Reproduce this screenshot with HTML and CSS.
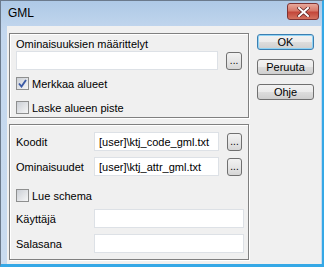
FILE: index.html
```html
<!DOCTYPE html>
<html lang="fi">
<head>
    <meta charset="UTF-8">
    <title>GML</title>
    <link rel="stylesheet" href="styles.css">
</head>
<body>
    <div class="window">
        <!-- Title bar -->
        <div class="titlebar">
            <span class="title">GML</span>
            <button class="close">
                <svg width="13" height="10" viewBox="0 0 13 10">
                    <path d="M2 1 L11 9 M11 1 L2 9" stroke="#5a2323" stroke-width="3.4" stroke-linecap="square"/>
                    <path d="M2 1 L11 9 M11 1 L2 9" stroke="#ffffff" stroke-width="2" stroke-linecap="square"/>
                </svg>
            </button>
        </div>

        <div class="client">
            <div class="main">
                <!-- Attribute definitions -->
                <div class="group group-top">
                    <div class="caption">Ominaisuuksien määrittelyt</div>
                    <div class="field-row">
                        <input class="text wide" type="text">
                        <button class="browse">...</button>
                    </div>
                    <label class="check first">
                        <span class="box checked">
                            <svg width="9" height="9" viewBox="0 0 9 9">
                                <path d="M1 4.5 L3.5 7.5 L8 1" fill="none" stroke="#3b5aa5" stroke-width="1.9"/>
                            </svg>
                        </span>
                        Merkkaa alueet
                    </label>
                    <label class="check second">
                        <span class="box"></span>
                        Laske alueen piste
                    </label>
                </div>

                <!-- Files and login -->
                <div class="group group-bottom">
                    <div class="field-row">
                        <span class="label">Koodit</span>
                        <input class="text" type="text" value="[user]\ktj_code_gml.txt">
                        <button class="browse">...</button>
                    </div>
                    <div class="field-row next">
                        <span class="label">Ominaisuudet</span>
                        <input class="text" type="text" value="[user]\ktj_attr_gml.txt">
                        <button class="browse">...</button>
                    </div>
                    <label class="check schema">
                        <span class="box"></span>
                        Lue schema
                    </label>
                    <div class="field-row login">
                        <span class="label">Käyttäjä</span>
                        <input class="text long" type="text">
                    </div>
                    <div class="field-row next">
                        <span class="label">Salasana</span>
                        <input class="text long" type="password">
                    </div>
                </div>
            </div>

            <div class="side">
                <button class="button default">OK</button>
                <button class="button">Peruuta</button>
                <button class="button">Ohje</button>
            </div>
        </div>
    </div>
</body>
</html>
```

FILE: styles.css
```css
body {
    margin: 0;
    padding: 0;
    font-family: "Liberation Sans", Arial, sans-serif;
    font-size: 11px;
    color: #000;
    background: #c6d9ee;
}
.window {
    width: 324px;
    height: 267px;
    box-sizing: border-box;
    background: linear-gradient(to bottom, #aec9e6, #c3d7ee 30px, #c9dbef);
    border-left: 1px solid #6b7a8c;
    border-top: 1px solid #6b7a8c;
    border-right: 2px solid #35a8e6;
    border-bottom: 3px solid #35a8e6;
    display: flex;
    flex-direction: column;
}
.titlebar {
    height: 25px;
    display: flex;
    align-items: center;
    justify-content: space-between;
    padding: 0 3px 0 7px;
}
.title {
    font-family: "Liberation Sans", Arial, sans-serif;
    font-size: 12px;
    margin-top: -2px;
}
.close {
    width: 32px;
    height: 17px;
    margin-top: -4px;
    padding: 0;
    border: 1px solid #7e3434;
    border-radius: 3px;
    background: linear-gradient(to bottom, #e8a89b, #d7796a 45%, #c3473a 55%, #d4735f);
    display: flex;
    align-items: center;
    justify-content: center;
}
.client {
    flex: 1;
    margin: 0 1px 0 6px;
    background: #f0f0f0;
    display: flex;
    padding: 7px 0 0 2px;
}
.main {
    width: 240px;
}
.group {
    box-sizing: border-box;
    border: 1px solid #808080;
    box-shadow: inset 1px 1px 0 #fff, 1px 1px 0 #fff;
    padding: 0 6px;
}
.group-top {
    height: 85px;
    padding-top: 4px;
}
.group-bottom {
    height: 136px;
    margin-top: 6px;
    padding-top: 7px;
}
.caption {
    height: 13px;
    line-height: 13px;
}
.field-row {
    display: flex;
    align-items: center;
    height: 19px;
}
.field-row.next {
    margin-top: 6px;
}
.field-row.login {
    margin-top: 7px;
}
.label {
    width: 78px;
    flex: none;
}
.text {
    box-sizing: border-box;
    height: 19px;
    width: 125px;
    margin: 0;
    padding: 0 4px;
    border: 1px solid #dde1e6;
    background: #fff;
    font-family: inherit;
    font-size: 11px;
    color: #000;
}
.text.wide {
    width: 203px;
}
.text.long {
    width: 150px;
}
.browse {
    width: 16px;
    height: 18px;
    margin-left: 8px;
    padding: 0 0 3px;
    box-sizing: border-box;
    border: 1px solid #707070;
    border-radius: 3px;
    background: linear-gradient(to bottom, #f2f2f2, #e6e6e6 50%, #d6d6d6);
    font-family: inherit;
    font-size: 10px;
    line-height: 10px;
    display: flex;
    align-items: flex-end;
    justify-content: center;
}
.check {
    display: flex;
    align-items: center;
    height: 13px;
}
.check.first {
    margin-top: 7px;
}
.check.second {
    margin-top: 11px;
}
.check.schema {
    margin-top: 13px;
}
.box {
    width: 11px;
    height: 11px;
    border: 1px solid #8e8f8f;
    background: linear-gradient(135deg, #cbcfd5, #f6f6f6);
    margin-right: 3px;
    display: flex;
    align-items: center;
    justify-content: center;
}
.side {
    display: flex;
    flex-direction: column;
    margin-left: 8px;
    padding-top: 1px;
}
.button {
    width: 57px;
    height: 16px;
    margin-bottom: 9px;
    padding: 0;
    border: 1px solid #707070;
    border-radius: 3px;
    background: linear-gradient(to bottom, #f2f2f2, #ebebeb 50%, #dddddd 51%, #cfcfcf);
    font-family: inherit;
    font-size: 11px;
    line-height: 14px;
}
.button.default {
    border-color: #3c7fb1;
    box-shadow: inset 0 0 0 1px #8fd3f5;
}
```
